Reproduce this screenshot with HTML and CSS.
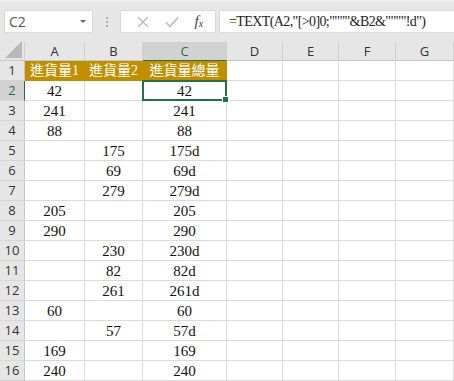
FILE: index.html
```html
<!DOCTYPE html>
<html>
<head>
<meta charset="utf-8">
<link rel="stylesheet" href="styles.css">
</head>
<body>
<div class="toolbar">
  <div class="namebox"><span class="name">C2</span><span class="arrow"></span></div>
  <div class="grip"><i></i><i></i><i></i></div>
  <div class="fbtns">
    <svg class="ico" width="12" height="12" viewBox="0 0 12 12"><path d="M1 1 L11 11 M11 1 L1 11" stroke="#b5b5b5" stroke-width="1.2" fill="none"/></svg>
    <svg class="ico" width="14" height="12" viewBox="0 0 14 12"><path d="M1 6.5 L5 10.5 L13 1.5" stroke="#b5b5b5" stroke-width="1.4" fill="none"/></svg>
    <span class="fx">f<sub>x</sub></span>
  </div>
  <div class="formula">=TEXT(A2,"[&gt;0]0;""""&amp;B2&amp;""""!d")</div>
</div>
<div class="sheet">
  <div class="corner"><svg width="17" height="17" viewBox="0 0 17 17"><polygon points="17,0 17,17 0,17" fill="#b9b9b9"/></svg></div>
  <div class="ch">A</div><div class="ch">B</div><div class="ch sel">C</div><div class="ch">D</div><div class="ch">E</div><div class="ch">F</div><div class="ch">G</div>

  <div class="rh">1</div><div class="c hd">進貨量1</div><div class="c hd">進貨量2</div><div class="c hd">進貨量總量</div><div class="c"></div><div class="c"></div><div class="c"></div><div class="c"></div>
  <div class="rh sel">2</div><div class="c">42</div><div class="c"></div><div class="c active">42</div><div class="c"></div><div class="c"></div><div class="c"></div><div class="c"></div>
  <div class="rh">3</div><div class="c">241</div><div class="c"></div><div class="c">241</div><div class="c"></div><div class="c"></div><div class="c"></div><div class="c"></div>
  <div class="rh">4</div><div class="c">88</div><div class="c"></div><div class="c">88</div><div class="c"></div><div class="c"></div><div class="c"></div><div class="c"></div>
  <div class="rh">5</div><div class="c"></div><div class="c">175</div><div class="c">175d</div><div class="c"></div><div class="c"></div><div class="c"></div><div class="c"></div>
  <div class="rh">6</div><div class="c"></div><div class="c">69</div><div class="c">69d</div><div class="c"></div><div class="c"></div><div class="c"></div><div class="c"></div>
  <div class="rh">7</div><div class="c"></div><div class="c">279</div><div class="c">279d</div><div class="c"></div><div class="c"></div><div class="c"></div><div class="c"></div>
  <div class="rh">8</div><div class="c">205</div><div class="c"></div><div class="c">205</div><div class="c"></div><div class="c"></div><div class="c"></div><div class="c"></div>
  <div class="rh">9</div><div class="c">290</div><div class="c"></div><div class="c">290</div><div class="c"></div><div class="c"></div><div class="c"></div><div class="c"></div>
  <div class="rh">10</div><div class="c"></div><div class="c">230</div><div class="c">230d</div><div class="c"></div><div class="c"></div><div class="c"></div><div class="c"></div>
  <div class="rh">11</div><div class="c"></div><div class="c">82</div><div class="c">82d</div><div class="c"></div><div class="c"></div><div class="c"></div><div class="c"></div>
  <div class="rh">12</div><div class="c"></div><div class="c">261</div><div class="c">261d</div><div class="c"></div><div class="c"></div><div class="c"></div><div class="c"></div>
  <div class="rh">13</div><div class="c">60</div><div class="c"></div><div class="c">60</div><div class="c"></div><div class="c"></div><div class="c"></div><div class="c"></div>
  <div class="rh">14</div><div class="c"></div><div class="c">57</div><div class="c">57d</div><div class="c"></div><div class="c"></div><div class="c"></div><div class="c"></div>
  <div class="rh">15</div><div class="c">169</div><div class="c"></div><div class="c">169</div><div class="c"></div><div class="c"></div><div class="c"></div><div class="c"></div>
  <div class="rh">16</div><div class="c">240</div><div class="c"></div><div class="c">240</div><div class="c"></div><div class="c"></div><div class="c"></div><div class="c"></div>
</div>
</body>
</html>
```
FILE: styles.css
```css
html, body { margin: 0; padding: 0; }
body { width: 454px; height: 381px; overflow: hidden; background: #e6e6e6; }

.toolbar {
  height: 42px;
  box-sizing: border-box;
  padding: 8px 0 0 4px;
  display: flex;
  align-items: flex-start;
  background: #e6e6e6;
  border-top: 2px solid #ededed;
}
.namebox {
  width: 89px; height: 23px; box-sizing: border-box;
  background: #fff;
  border: 1px solid #dadada;
  display: flex; align-items: center; justify-content: space-between;
  padding: 0 5px 0 4px;
}
.name { font-family: "Open Sans", "Noto Sans", sans-serif; font-size: 14px; color: #555; }
.arrow { width: 0; height: 0; border-left: 3px solid transparent; border-right: 3px solid transparent; border-top: 3px solid #666; margin-right: 1px; }
.grip { width: 27px; height: 23px; display: flex; flex-direction: column; align-items: center; justify-content: center; gap: 2px; }
.grip i { width: 2px; height: 2px; background: #b0b0b0; display: block; }
.fbtns {
  width: 96px; height: 23px; box-sizing: border-box;
  background: #fff; border: 1px solid #dadada;
  display: flex; align-items: center; justify-content: space-around;
  padding: 0 4px 0 8px;
}
.fx { font-family: "Liberation Serif", serif; font-style: italic; font-size: 15px; color: #444; line-height: 1; }
.fx sub { font-size: 10px; vertical-align: -1px; }
.formula {
  margin-left: 3px;
  flex: 1; height: 23px; box-sizing: border-box;
  background: #fff; border: 1px solid #dadada; border-right: none;
  font-family: "Liberation Serif", serif; font-size: 14px; letter-spacing: -0.6px; color: #222;
  padding: 1px 0 0 9px; line-height: 20px; white-space: nowrap;
}

.sheet {
  display: grid;
  grid-template-columns: 25px 60px 58px 84px 56px 56px 57px 58px;
  grid-template-rows: 19px repeat(16, 20px);
  background: #fff;
}
.corner { background: #e6e6e6; border-right: 1px solid #d0d0d0; border-bottom: 1px solid #c8c8c8; box-sizing: border-box; display: flex; align-items: flex-end; justify-content: flex-end; padding: 0 2px 2px 0; }
.corner svg { display: block; }
.ch {
  background: #e6e6e6; box-sizing: border-box;
  border-right: 1px solid #d0d0d0; border-bottom: 1px solid #c8c8c8;
  font-family: "Open Sans", "Noto Sans", sans-serif; font-size: 13px; color: #333;
  display: flex; align-items: center; justify-content: center; line-height: 1;
}
.ch.sel { background: #d2d2d2; color: #217346; border-bottom: 1px solid #217346; }
.rh {
  background: #e6e6e6; box-sizing: border-box;
  border-right: 1px solid #c8c8c8; border-bottom: 1px solid #d6d6d6;
  font-family: "Open Sans", "Noto Sans", sans-serif; font-size: 13px; color: #333;
  display: flex; align-items: center; justify-content: center; line-height: 1;
}
.rh.sel { background: #d2d2d2; color: #217346; border-right: 1px solid #217346; }
.c {
  box-sizing: border-box;
  border-right: 1px solid #dadada; border-bottom: 1px solid #dadada;
  font-family: "Liberation Serif", "Noto Sans CJK TC", serif; font-size: 15px; color: #111;
  display: flex; align-items: center; justify-content: center; line-height: 1;
  white-space: nowrap; padding-top: 1px;
}
.c.hd { background: #bf8f00; color: #fff; border-right-color: #bf8f00; border-bottom-color: #bf8f00; font-size: 14px; }
.c.active { position: relative; }
.c.active::before {
  content: ""; position: absolute; left: -1px; top: -1px; right: -1px; bottom: -1px;
  border: 2px solid #217346;
}
.c.active::after {
  content: ""; position: absolute; right: -3px; bottom: -3px; width: 5px; height: 5px;
  background: #217346; border: 1px solid #fff; box-sizing: content-box;
}
```
